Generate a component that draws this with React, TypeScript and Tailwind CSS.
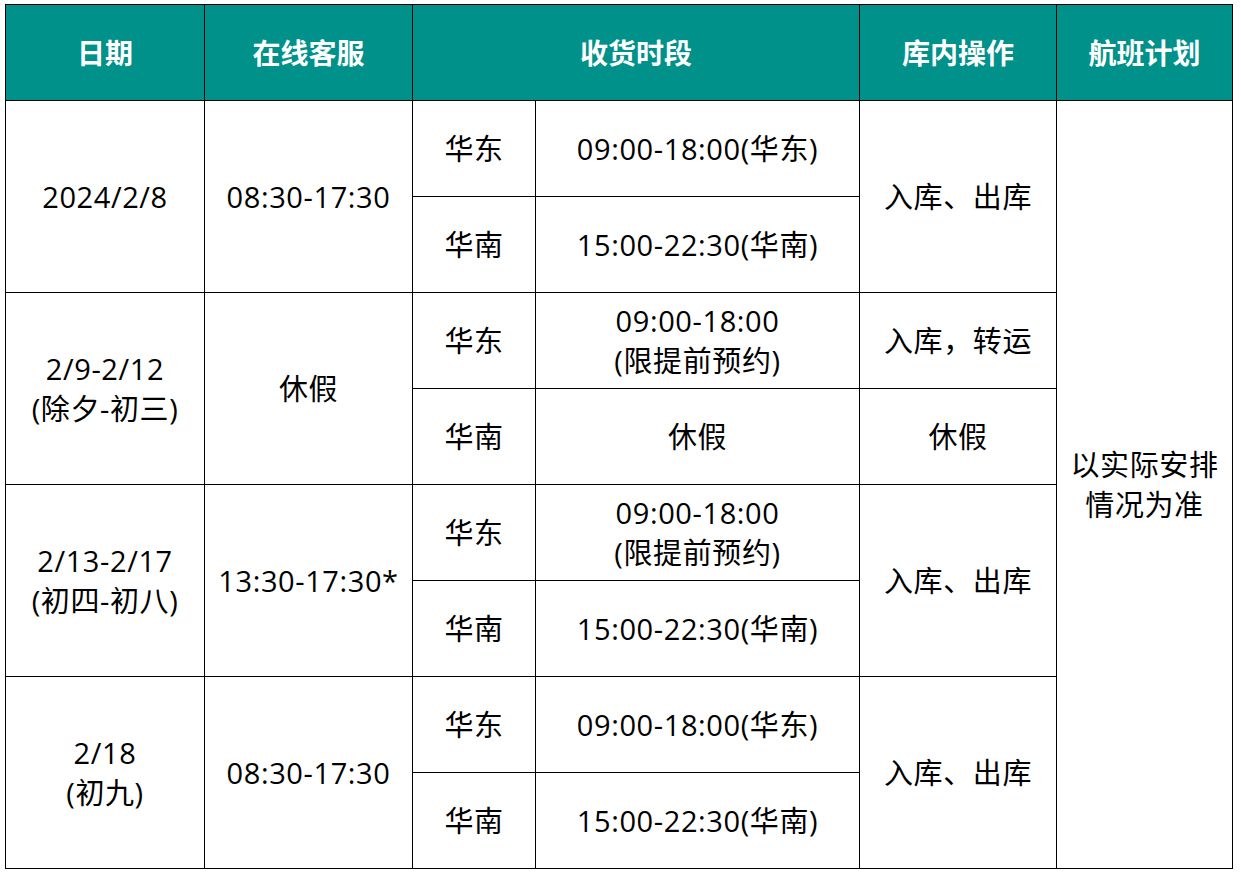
import React from 'react';

const td = "border border-black text-center align-middle p-0";

function Region({ name, time, ops }: { name: string; time: React.ReactNode; ops?: React.ReactNode }) {
  return (
    <>
      <td className={`${td} h-[96px]`}>{name}</td>
      <td className={td}>{time}</td>
      {ops}
    </>
  );
}

export default function App() {
  return (
    <div className="bg-white w-[1241px] h-[877px] pt-[4px] pl-[5px]" style={{ fontFamily: '"Open Sans", "Noto Sans CJK SC", sans-serif' }}>
      <table className="border-collapse text-[29px] tracking-[0.6px] leading-[40px] text-black table-fixed w-[1227px]">
        <colgroup>
          <col className="w-[199px]" />
          <col className="w-[208px]" />
          <col className="w-[123px]" />
          <col className="w-[324px]" />
          <col className="w-[197px]" />
          <col className="w-[176px]" />
        </colgroup>
        <thead>
          <tr className="bg-[#00918a] text-white h-[96px] text-[28px] tracking-normal">
            <th className={`${td} font-bold`}>日期</th>
            <th className={`${td} font-bold`}>在线客服</th>
            <th className={`${td} font-bold`} colSpan={2}>收货时段</th>
            <th className={`${td} font-bold`}>库内操作</th>
            <th className={`${td} font-bold`}>航班计划</th>
          </tr>
        </thead>
        <tbody>
          <tr>
            <td className={td} rowSpan={2}>2024/2/8</td>
            <td className={td} rowSpan={2}>08:30-17:30</td>
            <Region name="华东" time="09:00-18:00(华东)" ops={<td className={td} rowSpan={2}>入库、出库</td>} />
            <td className={td} rowSpan={8}>以实际安排<br />情况为准</td>
          </tr>
          <tr>
            <Region name="华南" time="15:00-22:30(华南)" />
          </tr>
          <tr>
            <td className={td} rowSpan={2}>2/9-2/12<br />(除夕-初三)</td>
            <td className={td} rowSpan={2}>休假</td>
            <Region name="华东" time={<>09:00-18:00<br />(限提前预约)</>} ops={<td className={td}>入库，转运</td>} />
          </tr>
          <tr>
            <Region name="华南" time="休假" ops={<td className={td}>休假</td>} />
          </tr>
          <tr>
            <td className={td} rowSpan={2}>2/13-2/17<br />(初四-初八)</td>
            <td className={td} rowSpan={2}>13:30-17:30*</td>
            <Region name="华东" time={<>09:00-18:00<br />(限提前预约)</>} ops={<td className={td} rowSpan={2}>入库、出库</td>} />
          </tr>
          <tr>
            <Region name="华南" time="15:00-22:30(华南)" />
          </tr>
          <tr>
            <td className={td} rowSpan={2}>2/18<br />(初九)</td>
            <td className={td} rowSpan={2}>08:30-17:30</td>
            <Region name="华东" time="09:00-18:00(华东)" ops={<td className={td} rowSpan={2}>入库、出库</td>} />
          </tr>
          <tr>
            <Region name="华南" time="15:00-22:30(华南)" />
          </tr>
        </tbody>
      </table>
    </div>
  );
}
